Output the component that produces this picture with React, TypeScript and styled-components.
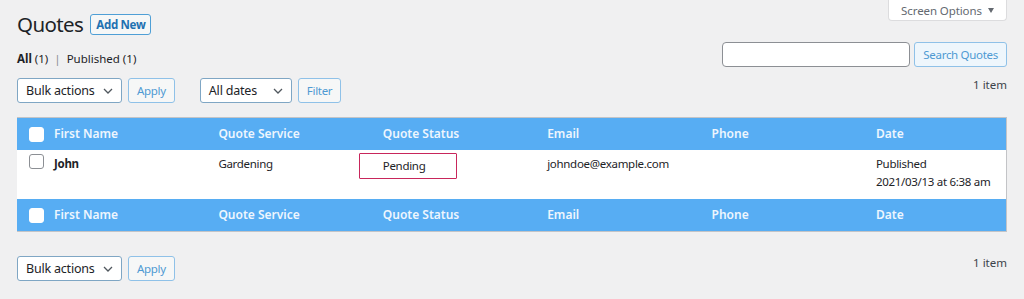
import React from 'react';
import styled, {createGlobalStyle} from 'styled-components';

const GlobalStyle = createGlobalStyle`
  html, body {
    margin: 0;
    padding: 0;
    background: #f0f0f1;
  }
  body {
    font-family: "Noto Sans", "Open Sans", sans-serif;
    font-size: 12px;
    color: #1d2327;
  }
`;

const Page = styled.div`
  width: 1024px;
  height: 299px;
  padding: 0 17px;
  box-sizing: border-box;
  overflow: hidden;
`;

const ScreenMeta = styled.div`
  display: flex;
  justify-content: flex-end;
  height: 0;
`;

const ScreenOptions = styled.button`
  height: 21px;
  width: 119px;
  padding: 0;
  background: #fff;
  border: 1px solid #dcdcde;
  border-top: none;
  border-radius: 0 0 4px 4px;
  font-family: inherit;
  font-size: 11.5px;
  letter-spacing: -0.1px;
  color: #646970;
  display: flex;
  align-items: center;
  justify-content: center;
  gap: 6px;
  &::after {
    content: '';
    border-left: 3.5px solid transparent;
    border-right: 3.5px solid transparent;
    border-top: 5px solid #646970;
  }
`;

const HeadingRow = styled.div`
  display: flex;
  align-items: center;
  gap: 7px;
  padding-top: 13px;
  height: 23px;
`;

const Title = styled.h1`
  margin: 0;
  font-size: 20.5px;
  letter-spacing: -0.6px;
  font-weight: 400;
  color: #1d2327;
  line-height: 23px;
`;

const OutlineButton = styled.button<{ $strong?: boolean; $tint?: boolean }>`
  height: ${p => (p.$strong ? '21px' : '25px')};
  padding: 0 ${p => (p.$strong ? '5px' : '8px')};
  border: 1px solid ${p => (p.$strong ? '#4f9fd6' : '#8fc1e8')};
  border-radius: 3px;
  background: ${p => (p.$tint ? '#eef6fc' : '#f6f7f7')};
  color: ${p => (p.$strong ? '#2271b1' : '#4f9ad3')};
  font-family: inherit;
  font-size: 11.5px;
  letter-spacing: ${p => (p.$strong ? '-0.3px' : '-0.3px')};
  font-weight: ${p => (p.$strong ? 700 : 400)};
  cursor: pointer;
  box-sizing: border-box;
`;

const FilterRow = styled.div`
  display: flex;
  justify-content: space-between;
  align-items: flex-start;
  margin-top: 6px;
  height: 31px;
`;

const Views = styled.div`
  margin-top: 9px;
  font-size: 11.5px;
  color: #50575e;
  display: flex;
  gap: 6px;
  b { color: #1d2327; font-weight: 700; }
  span { color: #1d2327; }
  em { font-style: normal; color: #8c8f94; }
`;

const SearchBox = styled.div`
  display: flex;
  gap: 4px;
`;

const SearchInput = styled.input`
  width: 188px;
  height: 25px;
  box-sizing: border-box;
  border: 1px solid #8c8f94;
  border-radius: 4px;
  background: #fff;
`;

const TableNav = styled.div<{ $bottom?: boolean }>`
  display: flex;
  align-items: center;
  height: 25px;
  margin: ${p => (p.$bottom ? '24px 0 0' : '5px 0 14px')};
`;

const Group = styled.div`
  display: flex;
  gap: 6px;
  margin-right: 25px;
`;

const Select = styled.div<{ $w: number }>`
  width: ${p => p.$w}px;
  height: 25px;
  box-sizing: border-box;
  border: 1px solid #7fa6c4;
  border-radius: 3px;
  background: #fff;
  display: flex;
  align-items: center;
  justify-content: space-between;
  padding: 0 8px 0 8px;
  font-size: 12.5px;
  letter-spacing: -0.2px;
  color: #1d2327;
`;

const Count = styled.div`
  margin-left: auto;
  align-self: flex-start;
  margin-top: -1px;
  font-size: 11.5px;
  color: #3c434a;
`;

const Table = styled.div`
  border: 1px solid #c3c4c7;
  border-left: none;
  background: #fff;
`;

const Row = styled.div<{ $head?: boolean }>`
  display: grid;
  grid-template-columns: 37px repeat(5, 164.4px) 1fr;
  background: ${p => (p.$head ? '#57adf3' : '#fff')};
  height: ${p => (p.$head ? '32px' : '49px')};
  align-items: ${p => (p.$head ? 'center' : 'start')};
  color: ${p => (p.$head ? '#eef6fe' : '#1d2327')};
  font-size: ${p => (p.$head ? '12px' : '11.5px')};
  letter-spacing: ${p => (p.$head ? '0' : '-0.3px')};
  font-weight: ${p => (p.$head ? 600 : 400)};
`;

const Cell = styled.div<{ $bold?: boolean }>`
  font-weight: ${p => (p.$bold ? 700 : 'inherit')};
  line-height: 18px;
`;

const BodyCell = styled(Cell)`
  padding-top: 5px;
`;

const CheckCell = styled.div<{ $head?: boolean }>`
  display: flex;
  justify-content: center;
  padding-left: 2px;
  padding-top: ${p => (p.$head ? '0' : '4px')};
`;

const Check = styled.span<{ $filled?: boolean }>`
  width: 13px;
  height: 13px;
  border-radius: 3px;
  border: 1px solid ${p => (p.$filled ? '#fff' : '#8c8f94')};
  background: #fff;
  display: block;
`;

const StatusBox = styled.div`
  display: inline-block;
  margin: -2px 0 0 -24px;
  padding: 3px 31px 3px 23px;
  border: 1.5px solid #c8265b;
  border-radius: 1px;
`;

const Chevron = () => (
  <svg width="10" height="6" viewBox="0 0 10 6">
    <path d="M1 1l4 4 4-4" fill="none" stroke="#50575e" strokeWidth="1.3" />
  </svg>
);

const columns = ['First Name', 'Quote Service', 'Quote Status', 'Email', 'Phone', 'Date'];

function HeaderRow() {
  return (
    <Row $head>
      <CheckCell $head><Check $filled /></CheckCell>
      {columns.map(c => <Cell key={c}>{c}</Cell>)}
    </Row>
  );
}

export default function App() {
  return (
    <Page>
      <GlobalStyle />
      <ScreenMeta>
        <ScreenOptions>Screen Options</ScreenOptions>
      </ScreenMeta>
      <HeadingRow>
        <Title>Quotes</Title>
        <OutlineButton $strong>Add New</OutlineButton>
      </HeadingRow>
      <FilterRow>
        <Views>
          <span><b>All</b> (1)</span>
          <em>|</em>
          <span>Published (1)</span>
        </Views>
        <SearchBox>
          <SearchInput />
          <OutlineButton $tint>Search Quotes</OutlineButton>
        </SearchBox>
      </FilterRow>
      <TableNav>
        <Group>
          <Select $w={105}>Bulk actions <Chevron /></Select>
          <OutlineButton>Apply</OutlineButton>
        </Group>
        <Group>
          <Select $w={92}>All dates <Chevron /></Select>
          <OutlineButton>Filter</OutlineButton>
        </Group>
        <Count>1 item</Count>
      </TableNav>
      <Table>
        <HeaderRow />
        <Row>
          <CheckCell><Check /></CheckCell>
          <BodyCell $bold>John</BodyCell>
          <BodyCell>Gardening</BodyCell>
          <BodyCell><StatusBox>Pending</StatusBox></BodyCell>
          <BodyCell>johndoe@example.com</BodyCell>
          <BodyCell />
          <BodyCell>Published<br />2021/03/13 at 6:38 am</BodyCell>
        </Row>
        <HeaderRow />
      </Table>
      <TableNav $bottom>
        <Group>
          <Select $w={105}>Bulk actions <Chevron /></Select>
          <OutlineButton>Apply</OutlineButton>
        </Group>
        <Count>1 item</Count>
      </TableNav>
    </Page>
  );
}
